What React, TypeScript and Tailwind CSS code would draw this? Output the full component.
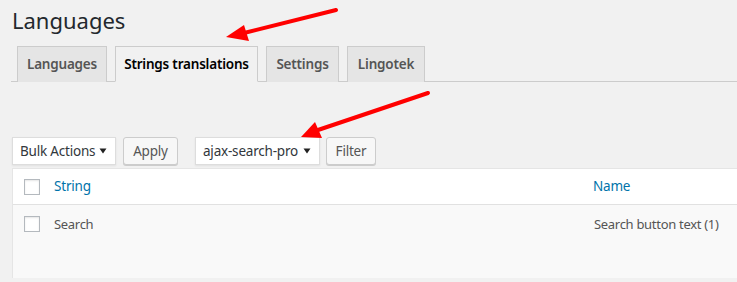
import React from "react";

const font = { fontFamily: '"Noto Sans", "Open Sans", sans-serif' };

function Caret() {
  return (
    <svg width="8" height="6" viewBox="0 0 8 6" className="shrink-0">
      <path d="M0.5 0.5 L7.5 0.5 L4 5.5 Z" fill="#222" />
    </svg>
  );
}

function Checkbox() {
  return <div className="w-[16px] h-[16px] border border-[#b4b9be] bg-white shadow-[inset_0_1px_2px_rgba(0,0,0,0.1)] shrink-0" />;
}

export default function App() {
  const tabs = [
    { label: "Languages", w: "w-[90px]", active: false },
    { label: "Strings translations", w: "w-[143px]", active: true },
    { label: "Settings", w: "w-[73px]", active: false },
    { label: "Lingotek", w: "w-[78px]", active: false },
  ];
  return (
    <div className="relative w-[737px] h-[282px] overflow-hidden bg-[#f1f1f1] text-[#444]" style={font}>
      <div className="pl-[12px]">
        <h1 className="pt-[6px] text-[22px] leading-[29px] text-[#23282d] font-normal">Languages</h1>
        <div className="mt-[11px] flex gap-[8px] pl-[6px] border-b border-[#ccc] h-[36px] -ml-[1px]">
          {tabs.map((t) => (
            <div
              key={t.label}
              className={`${t.w} h-[36px] flex items-center justify-center border border-[#ccc] text-[13.5px] font-semibold tracking-[-0.2px] ${
                t.active ? "bg-[#f1f1f1] border-b-[#f1f1f1] text-[#000]" : "bg-[#e5e5e5] text-[#555] border-b-0 h-[35px]"
              }`}
            >
              {t.label}
            </div>
          ))}
        </div>
        <div className="mt-[55px] flex items-center h-[28px]">
          <div className="w-[104px] h-[28px] flex items-center justify-between pl-[7px] pr-[8px] bg-white border border-[#ddd] shadow-[0_1px_2px_rgba(0,0,0,0.07)] text-[13.5px] text-[#32373c] tracking-[-0.2px]">
            <span>Bulk Actions</span>
            <Caret />
          </div>
          <div className="ml-[7px] w-[55px] h-[28px] flex items-center justify-center bg-[#f7f7f7] border border-[#ccc] rounded-[3px] shadow-[0_1px_0_#ccc] text-[13.5px] text-[#555] tracking-[-0.2px]">
            Apply
          </div>
          <div className="ml-[17px] w-[125px] h-[28px] flex items-center justify-between pl-[7px] pr-[8px] bg-white border border-[#ddd] shadow-[0_1px_2px_rgba(0,0,0,0.07)] text-[13.5px] text-[#32373c] tracking-[-0.2px]">
            <span>ajax-search-pro</span>
            <Caret />
          </div>
          <div className="ml-[6px] w-[50px] h-[28px] flex items-center justify-center bg-[#f7f7f7] border border-[#ccc] rounded-[3px] shadow-[0_1px_0_#ccc] text-[13.5px] text-[#555] tracking-[-0.2px]">
            Filter
          </div>
        </div>
        <div className="mt-[3px] w-[740px] border-l border-t border-[#e5e5e5] bg-white">
          <div className="h-[36px] flex items-center border-b border-[#e1e1e1] text-[13.5px] text-[#0073aa] tracking-[-0.2px]">
            <div className="w-[41px] pl-[11px]"><Checkbox /></div>
            <div className="flex-1">String</div>
            <div className="w-[159px]">Name</div>
          </div>
          <div className="h-[73px] bg-[#f9f9f9] flex items-start pt-[11px] text-[13px] text-[#555] tracking-[-0.3px]">
            <div className="w-[41px] pl-[11px]"><Checkbox /></div>
            <div className="flex-1 leading-[16px]">Search</div>
            <div className="w-[158px] leading-[16px] whitespace-nowrap">Search button text (1)</div>
          </div>
        </div>
      </div>
      <svg className="absolute left-0 top-0 pointer-events-none" width="737" height="282">
        <line x1="336" y1="10" x2="244" y2="33" stroke="#f00" strokeWidth="4" strokeLinecap="round" />
        <polygon points="226,37 244,25 249,41" fill="#f00" />
        <line x1="428" y1="93" x2="318" y2="130" stroke="#f00" strokeWidth="4" strokeLinecap="round" />
        <polygon points="301,137 315,122 322,138" fill="#f00" />
      </svg>
    </div>
  );
}
